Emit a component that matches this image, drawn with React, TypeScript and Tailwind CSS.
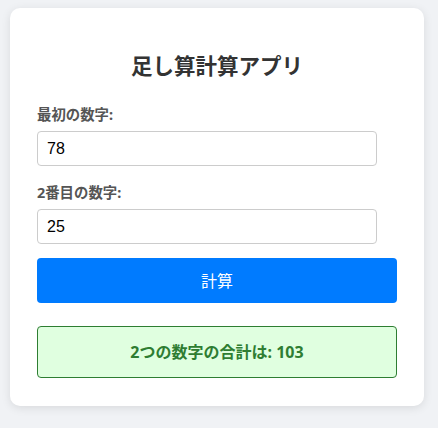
import React, { useState } from "react";

export default function App() {
  const [a, setA] = useState("78");
  const [b, setB] = useState("25");
  const sum = (parseFloat(a) || 0) + (parseFloat(b) || 0);
  return (
    <div
      className="min-h-[428px] w-full bg-[#f0f2f5] pt-[8px] pl-[10px]"
      style={{ fontFamily: '"Noto Sans", "Noto Sans CJK JP", sans-serif' }}
    >
      <div className="w-[414px] rounded-[10px] bg-white px-[27px] pt-[27px] pb-[28px] shadow-[0_2px_10px_rgba(0,0,0,0.1)]">
        <h1 className="mt-[16px] text-center text-[21.5px] leading-[30px] font-bold text-[#333]">
          足し算計算アプリ
        </h1>
        <label className="mt-[24px] block text-[14.4px] leading-[20px] font-bold text-[#555]">
          最初の数字:
        </label>
        <input
          value={a}
          onChange={(e) => setA(e.target.value)}
          className="mt-[6px] block h-[35px] w-[340px] rounded-[4px] border border-[#ccc] px-[9px] text-[16px] text-black outline-none"
          style={{ fontFamily: '"Liberation Sans", Arial, sans-serif' }}
        />
        <label className="mt-[17px] block text-[14.4px] leading-[20px] font-bold text-[#555]">
          2番目の数字:
        </label>
        <input
          value={b}
          onChange={(e) => setB(e.target.value)}
          className="mt-[6px] block h-[35px] w-[340px] rounded-[4px] border border-[#ccc] px-[9px] text-[16px] text-black outline-none"
          style={{ fontFamily: '"Liberation Sans", Arial, sans-serif' }}
        />
        <button className="mt-[14px] block h-[45px] w-[360px] rounded-[4px] bg-[#007bff] text-[16px] text-white">
          計算
        </button>
        <div className="mt-[23px] flex h-[52px] w-[360px] items-center justify-center rounded-[4px] border border-[#2e7d32] bg-[#e0ffe0] text-[16px] font-bold text-[#2e7d32]">
          2つの数字の合計は: {sum}
        </div>
      </div>
    </div>
  );
}
